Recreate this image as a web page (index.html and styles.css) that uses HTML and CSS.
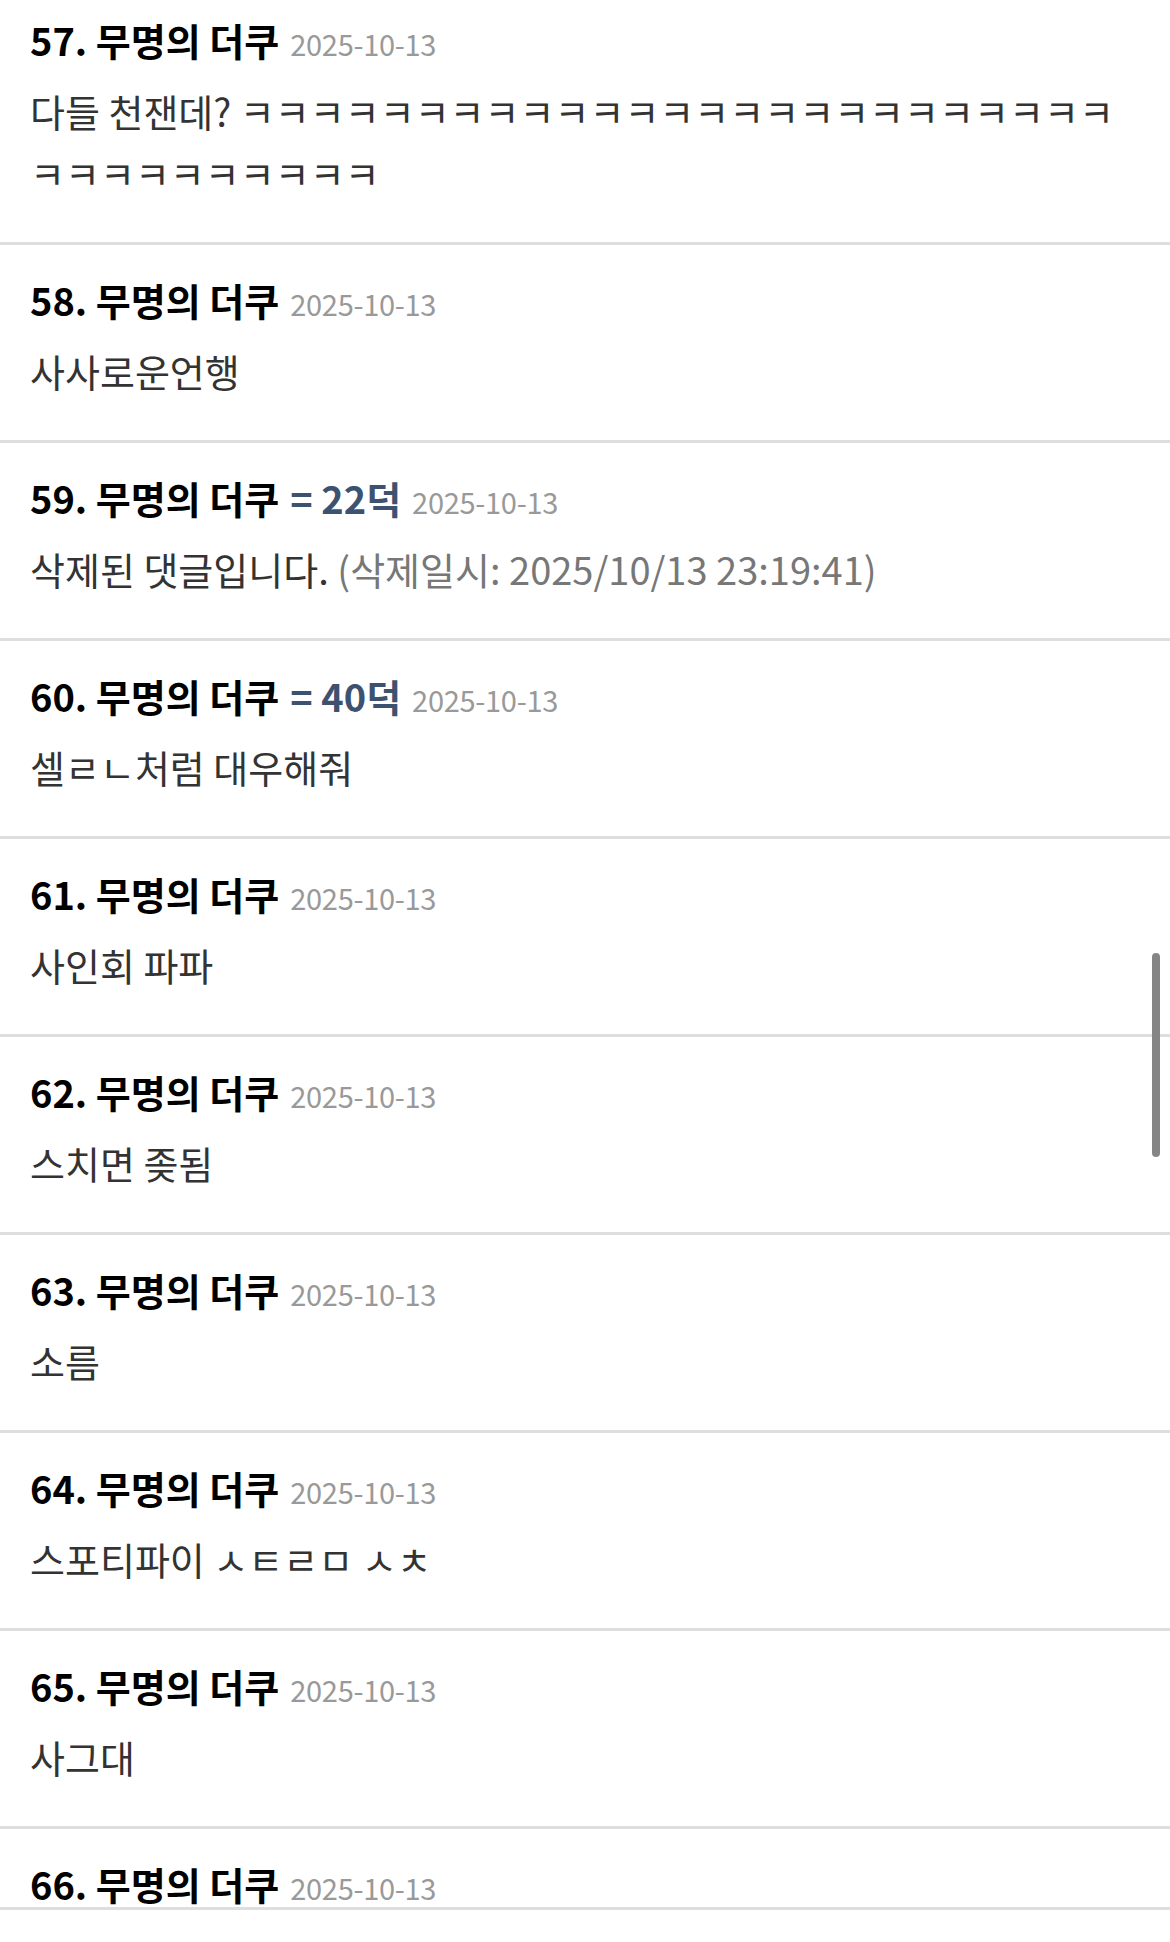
FILE: index.html
```html
<!DOCTYPE html>
<html>
<head>
  <meta charset="utf-8">
  <title>댓글</title>
  <link rel="stylesheet" href="styles.css">
</head>
<body>
  <ul class="cmt-list">
    <li class="cmt">
      <div class="cmt-head"><span class="nick">57. 무명의 더쿠</span><span class="date">2025-10-13</span></div>
      <div class="cmt-body">다들 천잰데? ㅋㅋㅋㅋㅋㅋㅋㅋㅋㅋㅋㅋㅋㅋㅋㅋㅋㅋㅋㅋㅋㅋㅋㅋㅋㅋㅋㅋㅋㅋㅋㅋㅋㅋㅋ</div>
    </li>
    <li class="cmt">
      <div class="cmt-head"><span class="nick">58. 무명의 더쿠</span><span class="date">2025-10-13</span></div>
      <div class="cmt-body">사사로운언행</div>
    </li>
    <li class="cmt">
      <div class="cmt-head"><span class="nick">59. 무명의 더쿠</span><span class="reply">= 22덕</span><span class="date">2025-10-13</span></div>
      <div class="cmt-body">삭제된 댓글입니다. <span class="deleted">(삭제일시: 2025/10/13 23:19:41)</span></div>
    </li>
    <li class="cmt">
      <div class="cmt-head"><span class="nick">60. 무명의 더쿠</span><span class="reply">= 40덕</span><span class="date">2025-10-13</span></div>
      <div class="cmt-body">셀ㄹㄴ처럼 대우해줘</div>
    </li>
    <li class="cmt">
      <div class="cmt-head"><span class="nick">61. 무명의 더쿠</span><span class="date">2025-10-13</span></div>
      <div class="cmt-body">사인회 파파</div>
    </li>
    <li class="cmt">
      <div class="cmt-head"><span class="nick">62. 무명의 더쿠</span><span class="date">2025-10-13</span></div>
      <div class="cmt-body">스치면 좆됨</div>
    </li>
    <li class="cmt">
      <div class="cmt-head"><span class="nick">63. 무명의 더쿠</span><span class="date">2025-10-13</span></div>
      <div class="cmt-body">소름</div>
    </li>
    <li class="cmt">
      <div class="cmt-head"><span class="nick">64. 무명의 더쿠</span><span class="date">2025-10-13</span></div>
      <div class="cmt-body">스포티파이 ㅅㅌㄹㅁ ㅅㅊ</div>
    </li>
    <li class="cmt">
      <div class="cmt-head"><span class="nick">65. 무명의 더쿠</span><span class="date">2025-10-13</span></div>
      <div class="cmt-body">사그대</div>
    </li>
    <li class="cmt">
      <div class="cmt-head"><span class="nick">66. 무명의 더쿠</span><span class="date">2025-10-13</span></div>
    </li>
  </ul>

  <div class="bottom-bar"></div>
  <div class="scroll-thumb"></div>
</body>
</html>
```

FILE: styles.css
```css
body {
  margin: 0;
  background: #fff;
  font-family: "Noto Sans CJK KR", "Noto Sans", sans-serif;
  color: #333;
  overflow: hidden;
}

.cmt-list {
  list-style: none;
  margin: -15px 0 0 0;
  padding: 0;
}

.cmt {
  padding: 31px 30px 38px 30px;
  border-bottom: 3px solid #dedede;
}

.cmt-head {
  display: flex;
  align-items: baseline;
  gap: 11px;
  height: 48px;
  line-height: 48px;
  white-space: nowrap;
}

.nick {
  font-size: 38px;
  font-weight: 700;
  color: #000;
}

.reply {
  font-size: 38px;
  font-weight: 700;
  color: #3d5271;
}

.date {
  font-size: 29px;
  color: #999;
  letter-spacing: -0.3px;
}

.cmt-body {
  margin-top: 16px;
  font-size: 38px;
  line-height: 62px;
  color: #333;
  word-break: break-all;
}

.deleted {
  color: #777;
}

.bottom-bar {
  position: fixed;
  left: 0;
  right: 0;
  bottom: 0;
  height: 32px;
  background: #fff;
  border-top: 3px solid #dedede;
}

.scroll-thumb {
  position: fixed;
  right: 10px;
  top: 953px;
  width: 8px;
  height: 204px;
  border-radius: 4px;
  background: #858585;
}
```
